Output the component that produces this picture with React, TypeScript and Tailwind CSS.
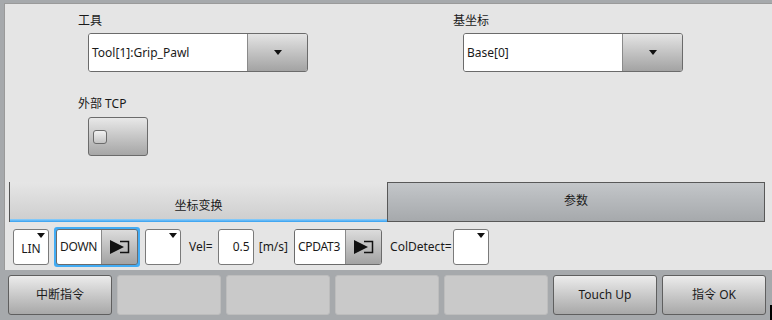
import React from "react";

const font = { fontFamily: '"Noto Sans", "Noto Sans CJK SC", sans-serif' };

function Caret({ className = "" }: { className?: string }) {
  return (
    <svg width="8" height="5" viewBox="0 0 8 5" className={className}>
      <polygon points="0,0 8,0 4,5" fill="#111" />
    </svg>
  );
}

function PlayIcon() {
  return (
    <svg width="22" height="16" viewBox="0 0 22 16">
      <polygon points="1,1 15,8 1,15" fill="#111" />
      <path d="M11 2.5 H19.5 V13.5 H11" fill="none" stroke="#111" strokeWidth="1.5" />
    </svg>
  );
}

function Combo({ value }: { value: string }) {
  return (
    <div className="flex h-[39px] w-[220px] rounded-[3px] border border-[#6b6b6b] overflow-hidden">
      <div className="flex flex-1 items-center bg-white pl-[3px] text-[12px] text-[#1a1a1a]">{value}</div>
      <div className="flex w-[60px] items-center justify-center border-l border-[#8a8a8a] bg-gradient-to-b from-[#e4e4e4] to-[#a3a3a3]">
        <Caret />
      </div>
    </div>
  );
}

function SmallDrop({ label = "" }: { label?: string }) {
  return (
    <div className="relative flex h-[36px] w-[36px] items-end justify-center rounded-[3px] border border-[#7a7a7a] bg-white pb-[9px] text-[12px] leading-none text-[#1a1a1a]">
      {label}
      <Caret className="absolute right-[3px] top-[3px]" />
    </div>
  );
}

function ParamBox({ value, width }: { value: string; width: string }) {
  return (
    <div className="flex h-[36px] rounded-[3px] border border-[#6b6b6b] overflow-hidden">
      <div className={`flex items-center bg-white pl-[3px] text-[12px] tracking-[-0.3px] text-[#1a1a1a] ${width}`}>{value}</div>
      <div className="flex w-[36px] items-center justify-center border-l border-[#8a8a8a] bg-gradient-to-b from-[#dcdcdc] to-[#a3a3a3]">
        <PlayIcon />
      </div>
    </div>
  );
}

function BarButton({ label }: { label?: string }) {
  if (!label) {
    return <div className="h-[40px] w-[104px] rounded-[3px] border border-[#bdbdbd] bg-[#c9c9c9]" />;
  }
  return (
    <div className="flex h-[40px] w-[104px] items-center justify-center rounded-[3px] border border-[#5f5f5f] bg-gradient-to-b from-[#ececec] to-[#a8a8a8] text-[12px] text-[#1a1a1a]">
      {label}
    </div>
  );
}

export default function App() {
  return (
    <div className="relative flex h-[320px] w-[772px] flex-col overflow-hidden bg-[#a6a9ac]" style={font}>
      {/* Light panel */}
      <div className="ml-[4px] mt-[3px] flex h-[267px] flex-col border-l border-t border-[#9a9a9a] bg-[#e5e5e5]">
        {/* Form */}
        <div className="flex h-[178px]">
          <div className="w-[375px] pl-[73px] pt-[9px]">
            <div className="text-[12px] leading-[16px] text-[#1a1a1a]">工具</div>
            <div className="ml-[10px] mt-[4px]">
              <Combo value="Tool[1]:Grip_Pawl" />
            </div>
            <div className="mt-[24px] text-[12px] leading-[16px] text-[#1a1a1a]">外部 TCP</div>
            <div className="ml-[10px] mt-[5px] flex h-[39px] w-[60px] items-center rounded-[3px] border border-[#6b6b6b] bg-gradient-to-b from-[#e8e8e8] to-[#a6a6a6] pl-[4px]">
              <div className="h-[14px] w-[14px] rounded-[3px] border border-[#6b6b6b] bg-gradient-to-b from-[#f2f2f2] to-[#c4c4c4]" />
            </div>
          </div>
          <div className="pl-[73px] pt-[9px]">
            <div className="text-[12px] leading-[16px] text-[#1a1a1a]">基坐标</div>
            <div className="ml-[10px] mt-[4px]">
              <Combo value="Base[0]" />
            </div>
          </div>
        </div>

        {/* Tabs */}
        <div className="flex h-[40px] pl-[4px]">
          <div className="flex w-[378px] flex-col border-l border-[#555] bg-gradient-to-b from-[#e6e6e6] to-[#cdcdcd]">
            <div className="flex flex-1 items-end justify-center pb-[4px] text-[12px] text-[#1a1a1a]">坐标变换</div>
            <div className="h-[3px] bg-gradient-to-b from-[#8fd0fb] to-[#2f9fef]" />
          </div>
          <div className="flex w-[378px] items-center justify-center border border-[#585858] bg-gradient-to-b from-[#c3c6c9] to-[#a6a9ac] pb-[2px] text-[12px] text-[#1a1a1a]">
            参数
          </div>
        </div>

        {/* Command row */}
        <div className="flex flex-1 items-center gap-[5px] pl-[8px] pt-[2px]">
          <SmallDrop label="LIN" />
          <div className="rounded-[3px] bg-[#42acf4] p-[2px]">
            <ParamBox value="DOWN" width="w-[44px]" />
          </div>
          <SmallDrop />
          <span className="ml-[3px] text-[12px] text-[#1a1a1a]">Vel=</span>
          <div className="flex h-[36px] w-[36px] items-center justify-end rounded-[3px] border border-[#7a7a7a] bg-white pr-[3px] text-[12px] text-[#1a1a1a]">
            0.5
          </div>
          <span className="text-[12px] text-[#1a1a1a]">[m/s]</span>
          <div className="ml-[1px]">
            <ParamBox value="CPDAT3" width="w-[50px]" />
          </div>
          <span className="ml-[3px] text-[12px] text-[#1a1a1a]">ColDetect=</span>
          <div className="-ml-[4px]">
            <SmallDrop />
          </div>
        </div>
      </div>

      {/* Bottom bar */}
      <div className="flex gap-[5px] pl-[8px] pt-[5px]">
        <BarButton label="中断指令" />
        <BarButton />
        <BarButton />
        <BarButton />
        <BarButton />
        <BarButton label="Touch Up" />
        <BarButton label="指令 OK" />
      </div>
      <div className="absolute bottom-0 right-0 h-[15px] w-[2px] bg-black" />
    </div>
  );
}
